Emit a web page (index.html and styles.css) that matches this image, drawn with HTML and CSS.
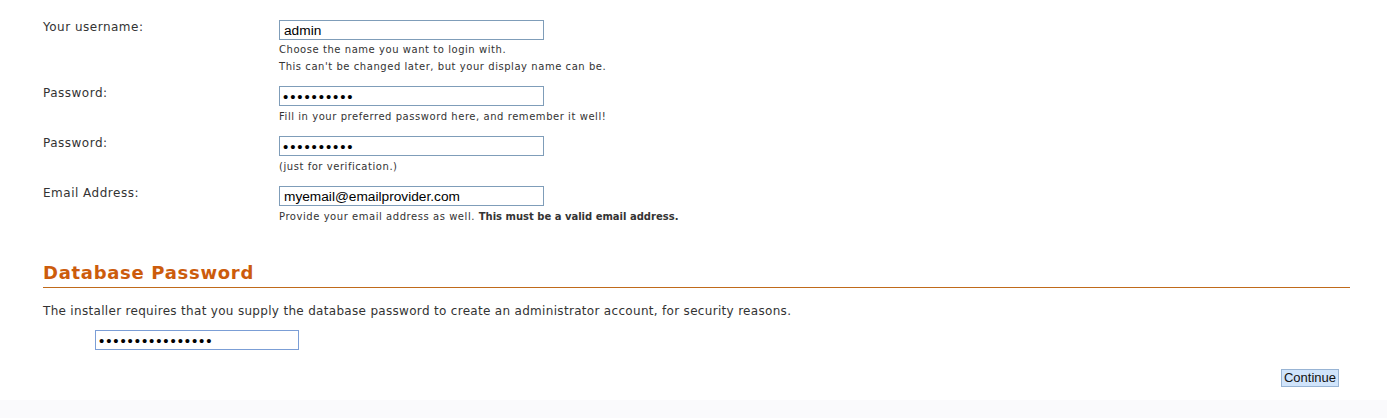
FILE: index.html
```html
<!DOCTYPE html>
<html>
<head>
<meta charset="utf-8">
<link rel="stylesheet" href="styles.css">
</head>
<body>
<div class="page">
  <div class="form">
    <div class="row">
      <label class="label">Your username:</label>
      <div class="field">
        <input class="text" type="text" value="admin">
        <div class="helps first">
          <p class="help">Choose the name you want to login with.</p>
          <p class="help">This can't be changed later, but your display name can be.</p>
        </div>
      </div>
    </div>
    <div class="row">
      <label class="label">Password:</label>
      <div class="field">
        <input class="text pass" type="password" value="adminadmin">
        <div class="helps">
          <p class="help">Fill in your preferred password here, and remember it well!</p>
        </div>
      </div>
    </div>
    <div class="row">
      <label class="label">Password:</label>
      <div class="field">
        <input class="text pass" type="password" value="adminadmin">
        <div class="helps">
          <p class="help">(just for verification.)</p>
        </div>
      </div>
    </div>
    <div class="row">
      <label class="label">Email Address:</label>
      <div class="field">
        <input class="text" type="text" value="myemail@emailprovider.com">
        <div class="helps">
          <p class="help">Provide your email address as well. <b>This must be a valid email address.</b></p>
        </div>
      </div>
    </div>
  </div>

  <h2 class="heading">Database Password</h2>
  <p class="intro">The installer requires that you supply the database password to create an administrator account, for security reasons.</p>
  <div class="dbrow">
    <input class="text pass dbpass" type="password" value="passwordpassword">
  </div>
  <div class="actions">
    <button class="btn">Continue</button>
  </div>
</div>
<div class="footer"></div>
</body>
</html>
```
FILE: styles.css
```css
html, body {
  margin: 0;
  padding: 0;
  background: #ffffff;
}
body {
  font-family: "DejaVu Sans", Verdana, sans-serif;
  color: #333333;
  width: 1387px;
  height: 418px;
  overflow: hidden;
}
.page {
  padding: 20px 37px 0 43px;
  height: 400px;
  box-sizing: border-box;
}
.form {
  display: flex;
  flex-direction: column;
  gap: 11px;
}
.row {
  display: grid;
  grid-template-columns: 236px 1fr;
}
.label {
  font-size: 12px;
  line-height: 14px;
  letter-spacing: 0.5px;
  padding-top: 0;
  color: #333;
}
.field {
  display: flex;
  flex-direction: column;
}
.text {
  width: 265px;
  height: 20px;
  box-sizing: border-box;
  border: 1px solid #7f9db9;
  padding: 0 4px;
  margin: 0;
  font-family: "Liberation Sans", Arial, sans-serif;
  font-size: 13.7px;
  color: #000;
  background: #fff;
  outline: none;
}
.pass {
  font-size: 15px;
  letter-spacing: 1.9px;
  padding-left: 3px;
}
.helps {
  margin-top: 2px;
}
.helps.first {
  margin-top: 1px;
}
.help {
  margin: 0;
  font-size: 10px;
  line-height: 17px;
  letter-spacing: 0.55px;
  color: #333;
}
.help b {
  font-weight: bold;
  letter-spacing: 0;
}
.heading {
  margin: 36px 0 0 0;
  font-size: 18px;
  line-height: 24px;
  letter-spacing: 0.7px;
  font-weight: bold;
  color: #cc5c0c;
  border-bottom: 1px solid #c06a1a;
  padding-bottom: 2px;
}
.intro {
  margin: 15px 0 0 0;
  font-size: 12px;
  line-height: 16px;
  letter-spacing: 0.31px;
  color: #333;
}
.dbrow {
  padding: 11px 0 0 52px;
}
.dbpass {
  width: 204px;
  border: 1px solid #7b9ed6;
}
.actions {
  display: flex;
  justify-content: flex-end;
  padding: 19px 11px 0 0;
}
.btn {
  font-family: "Liberation Sans", Arial, sans-serif;
  font-size: 13px;
  height: 18px;
  padding: 0 2px;
  line-height: 16px;
  background: #d0e4fb;
  border: 1px solid #98b4d4;
  color: #111;
  border-radius: 0;
}
.footer {
  height: 18px;
  background: #fafafc;
}
```
